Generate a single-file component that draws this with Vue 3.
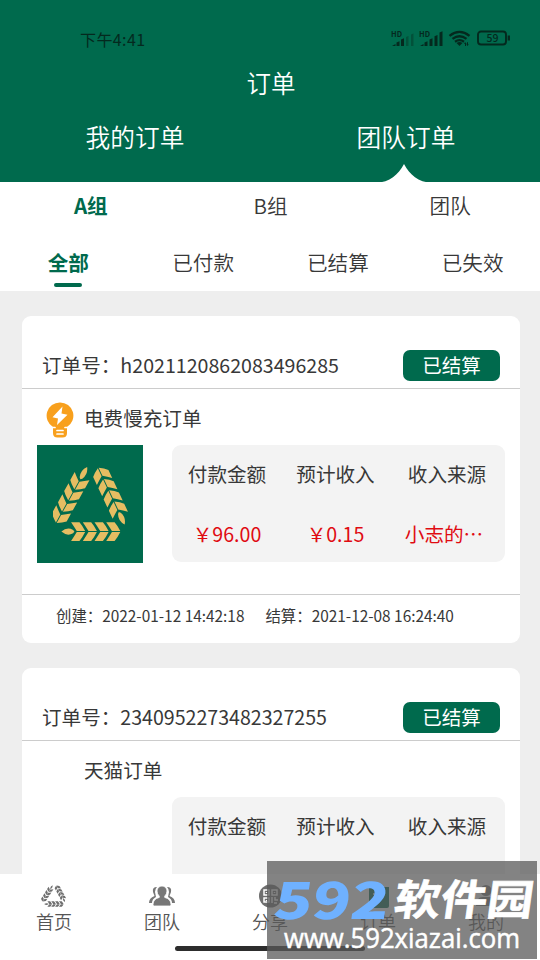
<script setup>
const armPath =
  'M0 0Q17-15 35-5L39 0L35 5Q17 15 0 0Z' +
  [29, 64, 99, 134]
    .map((x) => `M${x}-28H${x + 25}Q${x + 34}-18 ${x + 42}-1.500H${x + 17}Q${x + 9}-15 ${x}-28ZM${x} 28H${x + 25}Q${x + 34} 18 ${x + 42} 1.500H${x + 17}Q${x + 9} 15 ${x} 28Z`)
    .join('')
const arms = [
  'translate(123 287)',
  'translate(312 266) rotate(-115) scale(1.06 .9)',
  'translate(200 94) rotate(119) scale(1.08 .9)',
]

const groups = ['A组', 'B组', '团队']
const states = ['全部', '已付款', '已结算', '已失效']
const labels = ['付款金额', '预计收入', '收入来源']
const orders = [
  {
    no: 'h2021120862083496285',
    name: '电费慢充订单',
    picture: true,
    values: ['￥96.00', '￥0.15', '小志的…'],
    created: '2022-01-12 14:42:18',
    settled: '2021-12-08 16:24:40',
  },
  { no: '2340952273482327255', name: '天猫订单', picture: false, values: [], created: '', settled: '' },
]
const nav = [
  { key: 'home', text: '首页' },
  { key: 'team', text: '团队' },
  { key: 'share', text: '分享' },
  { key: 'order', text: '订单' },
  { key: 'mine', text: '我的' },
]
</script>

<template>
  <div class="screen">
    <header class="header">
      <div class="status">
        <span class="time">下午4:41</span>
        <svg class="status-icons" width="122" height="20" viewBox="0 0 122 20">
          <g fill="#04291e">
            <text x="1" y="8" class="hd" textLength="11" lengthAdjust="spacingAndGlyphs">HD</text>
            <path d="M2 17l3.500-2V17zM6.500 13.500l3-1.200V17h-3zM11 10.500l3-1.200V17h-3z" />
            <path d="M16 8l2.500-1v10H16zM21 5.500l2.500-1V17H21z" opacity=".38" />
            <text x="29" y="8" class="hd" textLength="11" lengthAdjust="spacingAndGlyphs">HD</text>
            <path d="M30 17l3.500-2V17zM34.500 13.500l3-1.200V17h-3zM39.500 10.500l3-1.200V17h-3zM44.500 7.200l3-1.200v11h-3zM49.500 3.500l3-1.200V17h-3z" />
            <path d="M66.500 14q3-2 6 0l-3 3z" />
            <path d="M75 13l1.600 2H76v2h-1v-2h-.800zM77.500 17l-1.200-1.700h.7v-2h1v2h.800z" />
          </g>
          <g fill="none" stroke="#04291e" stroke-width="2.300">
            <path d="M59.500 6.800Q69.500-1 79.500 6.800M62.500 9.900q7-5.200 14 0M65 12.700q4.500-3 9 0" />
            <rect x="88" y="2.500" width="28" height="13" rx="3" stroke-width="1.900" />
            <path d="M118.800 6.500v5" />
          </g>
          <text x="96.500" y="12.800" class="battery" textLength="12" lengthAdjust="spacingAndGlyphs">59</text>
        </svg>
      </div>
      <h1 class="title">订单</h1>
      <div class="main-tabs">
        <span>我的订单</span>
        <span>团队订单</span>
      </div>
      <svg class="notch" width="56" height="19" viewBox="0 0 56 19">
        <path d="M0 19C14 18 22 11 28 0C34 11 42 18 56 19Z" fill="#fff" />
      </svg>
    </header>

    <div class="filters">
      <div class="groups">
        <span v-for="(g, i) in groups" :key="g" :class="{ active: i === 0 }">{{ g }}</span>
      </div>
      <div class="states">
        <span v-for="(s, i) in states" :key="s" :class="{ active: i === 0 }">{{ s }}</span>
      </div>
    </div>

    <main class="list">
      <article v-for="o in orders" :key="o.no" class="card">
        <div class="card-head">
          <span class="order-no">订单号：{{ o.no }}</span>
          <span class="badge">已结算</span>
        </div>
        <div class="card-body">
          <div class="product">
            <svg v-if="o.picture" class="bulb" width="28" height="36" viewBox="0 0 28 36">
              <path d="M14 .5A13.200 13.200 0 0 0 7 25v6q0 4.500 4.500 4.500h5Q21 35.500 21 31v-6A13.200 13.200 0 0 0 14 .5Z" fill="#f8a01d" />
              <path d="M16.500 4.500L6.500 15.200l5.500 1.400-1 6.400 10.500-10.300-6-1.300z" fill="#fff" />
              <path d="M6.500 25.500h2.500M19 25.500h2.500M11 28.500h6M11 32h6" stroke="#fff" stroke-width="1.700" stroke-linecap="round" />
            </svg>
            <span v-else class="bulb-space"></span>
            <span>{{ o.name }}</span>
          </div>
          <div class="detail">
            <div class="thumb" :class="{ filled: o.picture }">
              <svg v-if="o.picture" width="75" height="78" viewBox="98 88 224 233">
                <path v-for="a in arms" :key="a" :d="armPath" :transform="a" fill="#e6bd62" />
              </svg>
            </div>
            <div class="panel">
              <span v-for="l in labels" :key="l" class="label">{{ l }}</span>
              <span v-for="v in o.values" :key="v" class="value">{{ v }}</span>
            </div>
          </div>
        </div>
        <div v-if="o.created" class="card-foot">
          <span>创建：{{ o.created }}</span>
          <span>结算：{{ o.settled }}</span>
        </div>
      </article>
    </main>

    <nav class="nav">
      <div v-for="n in nav" :key="n.key" class="nav-item">
        <svg v-if="n.key === 'home'" width="26" height="24" viewBox="94 80 236 248" preserveAspectRatio="none">
          <path v-for="a in arms" :key="a" :d="armPath" :transform="a" fill="#6f6f6f" />
        </svg>
        <svg v-else-if="n.key === 'team'" width="26" height="24" viewBox="0 0 26 24">
          <path d="M8 3Q3 3 4 8l1.500 4Q0 14 0 19h3q0-4 4-6L6 8q0-3 2-5ZM18 3q5 0 4 5l-1.500 4Q26 14 26 19h-3q0-4-4-6l1-5q0-3-2-5Z" fill="#777" />
          <path d="M13 2a5 5 0 0 1 5 5q0 3-2.300 5.200v1.200q6.300 1.600 6.300 7.100Q22 22 20.500 22h-15Q4 22 4 20.500q0-5.500 6.300-7.100v-1.200Q8 10 8 7a5 5 0 0 1 5-5Z" fill="#777" stroke="#fff" stroke-width=".8" />
        </svg>
        <svg v-else-if="n.key === 'share'" width="26" height="24" viewBox="0 0 26 24">
          <circle cx="13.500" cy="12" r="11.500" fill="#6f6f6f" />
          <path d="M7 6h5v5H7zM15 6h5v5h-5zM7 14h5v4H7zM15 13v6M18 13v3h3M17 19h3M9.500 8v1M17.500 8v1M9.500 16v1" fill="none" stroke="#fff" stroke-width="1.500" />
        </svg>
        <svg v-else-if="n.key === 'order'" width="26" height="24" viewBox="0 0 26 24">
          <path d="M4 3h20v19q0 2-2 2H6q-2 0-2-2z" fill="#006a4d" />
          <path d="M10 1h8v5h-8z" fill="#006a4d" stroke="#d6e9e2" />
          <path d="M8 10h12M8 14h9" stroke="#fff" stroke-width="1.500" />
        </svg>
        <svg v-else width="26" height="24" viewBox="0 0 26 24">
          <circle cx="13" cy="6.500" r="5.500" fill="#777" />
          <path d="M3 22q0-9 7-9h6q7 0 7 9Z" fill="#777" />
        </svg>
        <span>{{ n.text }}</span>
      </div>
    </nav>
    <div class="home-bar"></div>

    <div class="watermark">
      <svg width="270" height="98" viewBox="0 0 270 98">
        <g transform="translate(0 58) skewX(-8)">
          <text x="5" y="0" class="wm-num" textLength="115" lengthAdjust="spacingAndGlyphs">592</text>
          <text x="125" y="-4" class="wm-cn" textLength="139" lengthAdjust="spacingAndGlyphs">软件园</text>
        </g>
        <text x="17" y="87" class="wm-url" textLength="236" lengthAdjust="spacingAndGlyphs">www.592xiazai.com</text>
      </svg>
    </div>
  </div>
</template>

<style>
body {
  margin: 0;
  overflow: hidden;
}
</style>

<style scoped>
.screen {
  position: relative;
  width: 540px;
  height: 960px;
  overflow: hidden;
  display: flex;
  flex-direction: column;
  box-sizing: border-box;
  background: #eee;
  color: #383838;
  font-family: "Noto Sans CJK SC", sans-serif;
  font-weight: 400;
  white-space: nowrap;
}
.header {
  position: relative;
  flex: none;
  height: 182px;
  background: #006a4d;
  color: #fff;
  font-size: 24.700px;
  font-weight: 350;
}
.status {
  display: flex;
  justify-content: space-between;
  align-items: center;
  height: 28px;
  padding: 25px 28px 0 80px;
  color: #04291e;
}
.time {
  font-size: 16px;
  font-weight: 400;
  letter-spacing: 0.4px;
  line-height: 26px;
}
.hd {
  font: 700 7.500px "Noto Sans CJK SC", sans-serif;
}
.battery {
  font: 500 11px "Noto Sans CJK SC", sans-serif;
  fill: #04291e;
}
.title {
  margin: 0;
  height: 60px;
  padding-left: 2px;
  line-height: 60px;
  font-size: 24.500px;
  font-weight: inherit;
  text-align: center;
}
.main-tabs {
  display: grid;
  grid-template-columns: 1fr 1fr;
  line-height: 46px;
  text-align: center;
}
.main-tabs span:last-child {
  padding-left: 2px;
}
.notch {
  position: absolute;
  left: 376px;
  top: 164px;
}
.filters {
  flex: none;
  height: 109px;
  background: #fff;
  font-size: 20.600px;
  font-weight: 350;
  text-align: center;
}
.groups {
  display: grid;
  grid-template-columns: repeat(3, 1fr);
  height: 51px;
  padding-left: 1px;
  line-height: 47px;
}
.states {
  display: grid;
  grid-template-columns: repeat(4, 1fr);
  padding-left: 1px;
  line-height: 58px;
}
.states span {
  display: flex;
  flex-direction: column;
  align-items: center;
}
.active {
  color: #006a4d;
  font-weight: 700;
}
.states .active::after {
  content: "";
  width: 28px;
  height: 4px;
  margin-top: -8px;
  border-radius: 2px;
  background: #006a4d;
}
.list {
  flex: 1;
  min-height: 0;
  overflow: hidden;
  display: flex;
  flex-direction: column;
  gap: 25px;
  padding: 25px 20px 0 22px;
}
.card {
  flex: none;
  height: 327px;
  border-radius: 9px;
  background: #fff;
}
.card-head {
  display: flex;
  justify-content: space-between;
  align-items: center;
  box-sizing: border-box;
  height: 73px;
  padding: 26px 20px 0 20px;
  border-bottom: 1px solid #ccc;
  font-size: 19.600px;
}
.order-no {
  line-height: 30px;
}
.badge {
  width: 97px;
  height: 31px;
  margin-top: 1px;
  line-height: 29px;
  border-radius: 7px;
  background: #006a4d;
  color: #fff;
  font-size: 19.500px;
  text-align: center;
}
.card-body {
  box-sizing: border-box;
  height: 205px;
  padding: 13px 15px 0 15px;
  font-size: 19.600px;
}
.product {
  display: flex;
  gap: 10px;
  height: 43px;
  padding-left: 9px;
  line-height: 31px;
}
.bulb-space {
  width: 28px;
}
.detail {
  display: flex;
  justify-content: space-between;
}
.thumb {
  display: flex;
  align-items: center;
  justify-content: center;
  width: 106px;
  height: 118px;
}
.filled {
  background: #006a4d;
}
.panel {
  display: grid;
  grid-template-columns: 110px 107px 116px;
  grid-template-rows: 60px 57px;
  width: 333px;
  height: 117px;
  border-radius: 9px;
  background: #f3f3f3;
  text-align: center;
  line-height: 57px;
}
.value {
  color: #e00b12;
}
.value:last-child {
  padding-right: 6px;
}
.card-foot {
  display: flex;
  gap: 21px;
  padding-left: 34px;
  border-top: 1px solid #ccc;
  line-height: 41px;
  font-size: 15.400px;
}
.nav {
  flex: none;
  display: grid;
  grid-template-columns: repeat(5, 1fr);
  height: 86px;
  background: #fff;
  color: #555;
  font-size: 18px;
  font-weight: 350;
}
.nav-item {
  display: flex;
  flex-direction: column;
  align-items: center;
  padding-top: 10px;
  line-height: 27px;
}
.home-bar {
  position: absolute;
  left: 175px;
  top: 946px;
  width: 190px;
  height: 5px;
  border-radius: 3px;
  background: #2d2d2d;
}
.watermark {
  position: absolute;
  left: 267px;
  top: 861px;
  width: 270px;
  height: 98px;
  background: rgba(90, 90, 90, 0.75);
}
.wm-num {
  font: 900 51px "Noto Sans CJK SC", sans-serif;
  fill: #6fb1ff;
}
.wm-cn {
  font: 700 42px "Noto Sans CJK SC", sans-serif;
  fill: #fff;
  stroke: #fff;
  stroke-width: 0.6px;
}
.wm-url {
  font: 500 27px "Open Sans", sans-serif;
  fill: #fff;
  stroke: #fff;
  stroke-width: 0.5px;
}
</style>
